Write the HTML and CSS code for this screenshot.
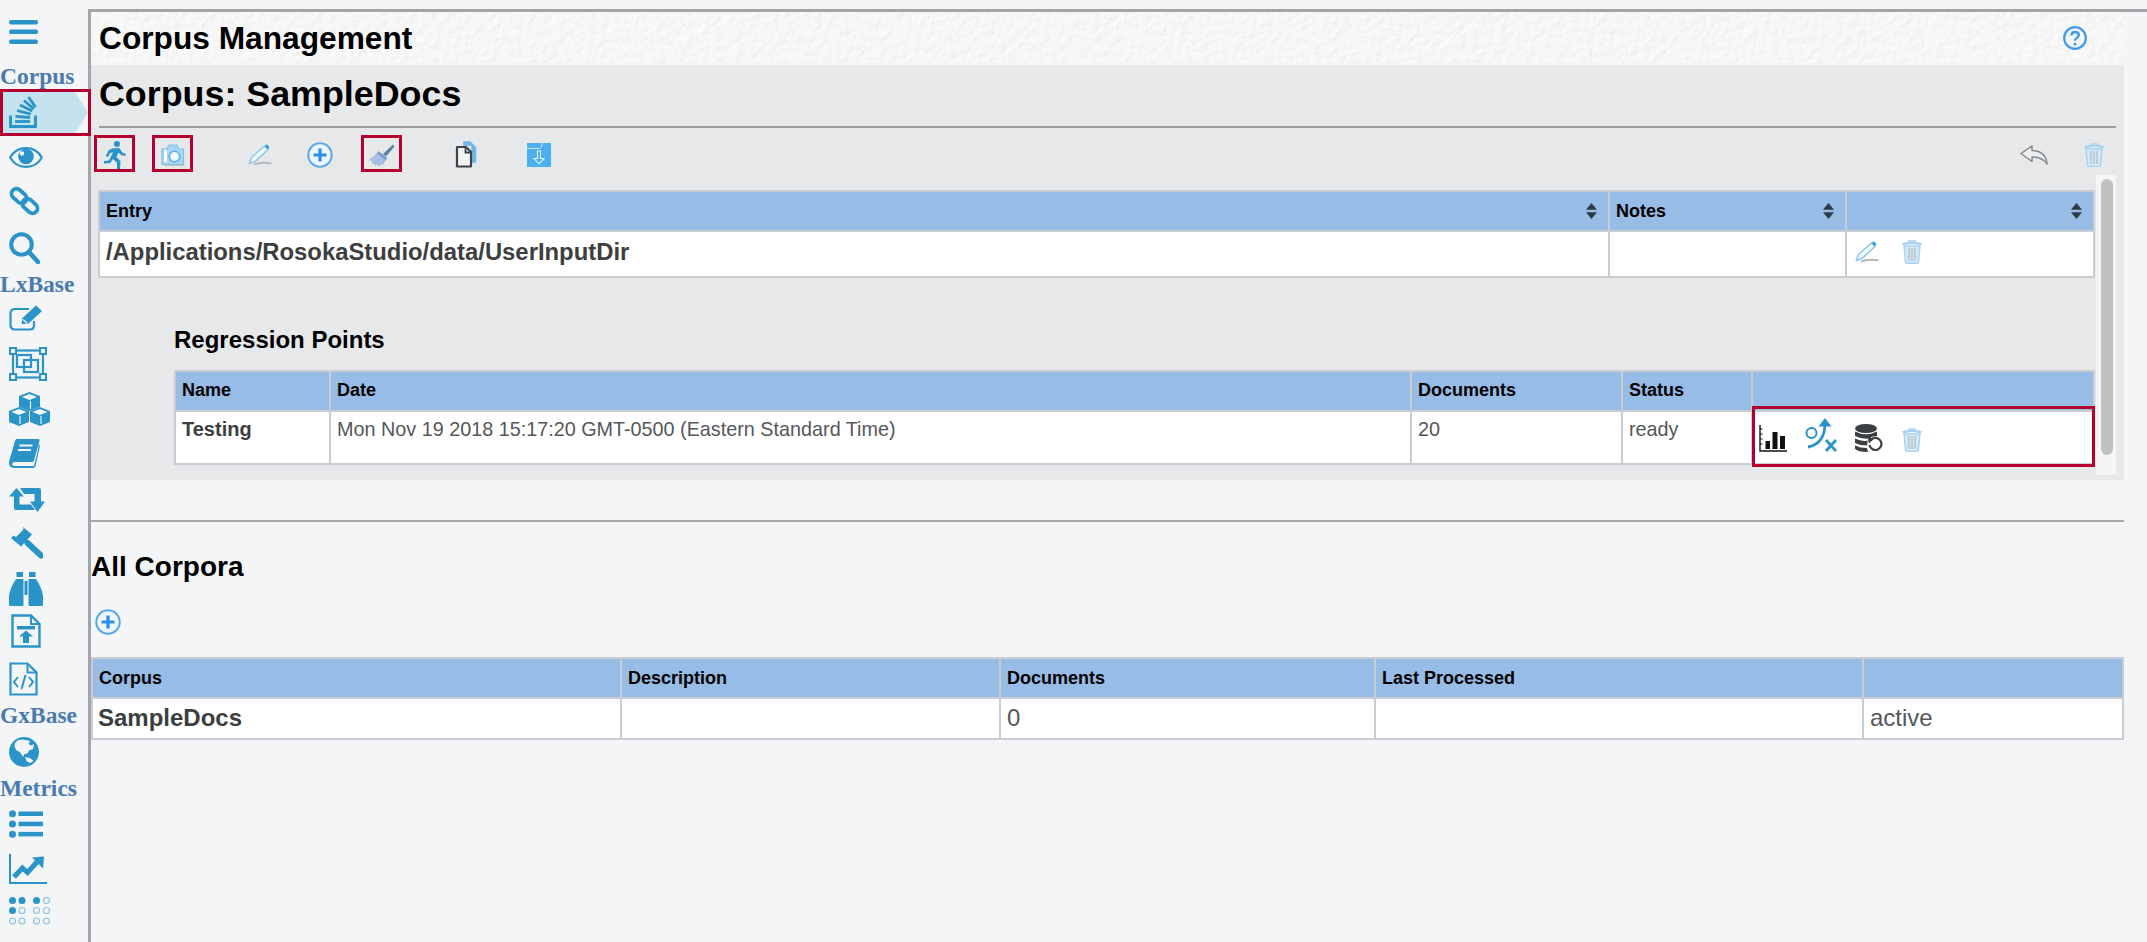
FILE: index.html
```html
<!DOCTYPE html>
<html lang="en">
<head>
<meta charset="utf-8">
<title>Corpus Management</title>
<link rel="stylesheet" href="styles.css">
</head>
<body>
<svg class="defs" width="0" height="0" aria-hidden="true">
  <defs>
    <filter id="paper" x="0" y="0" width="100%" height="100%">
      <feTurbulence type="fractalNoise" baseFrequency="0.14" numOctaves="4" seed="7"/>
      <feDiffuseLighting lighting-color="#ffffff" surfaceScale="0.55">
        <feDistantLight azimuth="45" elevation="68"/>
      </feDiffuseLighting>
    </filter>
    <symbol id="trash" viewBox="0 0 20 24">
      <path d="M7 2.500V1h6v1.500" fill="none" stroke="#a9d3ee" stroke-width="1.500"/>
      <path d="M0.500 4.500Q10 1 19.500 4.500" fill="none" stroke="#a9d3ee" stroke-width="2.600"/>
      <path d="M2 6H18L16.500 22Q16.300 23.500 15 23.500H5Q3.700 23.500 3.500 22Z" fill="#d3e8f5" stroke="#a9d3ee" stroke-width="1.400"/>
      <path d="M7 8V21M10 8V21M13 8V21" stroke="#b5bfc7" stroke-width="1.300"/>
    </symbol>
    <symbol id="pencil" viewBox="0 0 24 22">
      <path d="M1.500 19.500L3.500 13.500L16.500 2L20 5.500L7 17.500Z" fill="#f4f9fc" stroke="#8ecbea" stroke-width="1.600"/>
      <path d="M16.500 2L18 .8Q19 .2 20 1.200L21 2.300Q21.700 3.300 20.800 4.200L20 5.500Z" fill="#3aa3df"/>
      <path d="M6 20.500Q14 17.500 23.500 19.500" fill="none" stroke="#b7b9bb" stroke-width="2"/>
    </symbol>
    <symbol id="plus" viewBox="0 0 26 26">
      <circle cx="13" cy="13" r="11.700" fill="#eef6fc" stroke="#59a9ea" stroke-width="2"/>
      <path d="M13 6.500V19.500M6.500 13H19.500" stroke="#2a8fec" stroke-width="3.200"/>
    </symbol>
  </defs>
</svg>

<nav class="sidebar">
  <svg class="ic i-menu" viewBox="0 0 29 24"><g fill="#2a93c8"><rect width="29" height="4.500" rx="2"/><rect y="9.500" width="29" height="4.500" rx="2"/><rect y="19.500" width="29" height="4.500" rx="2"/></g></svg>
  <div class="side-label lab-corpus">Corpus</div>
  <div class="active-item">
    <svg class="ic i-stack" viewBox="0 0 28 32"><g fill="none" stroke="#2a93c8" stroke-width="2.800"><path d="M1.500 19.500V30.500H26.500V19.500"/><path d="M6 25.500H21"/><path d="M6.500 20.300L21 21.500"/><path d="M8 14.500L21.800 18.200"/><path d="M11 9L23.300 15"/><path d="M15 4.500L25 13"/><path d="M19.500 1L26.500 11"/></g></svg>
  </div>
  <svg class="ic i-eye" viewBox="0 0 34 21"><path d="M1.200 10.500C8 -2 26 -2 32.800 10.500C26 23 8 23 1.200 10.500Z" fill="none" stroke="#2a93c8" stroke-width="2.200"/><circle cx="17" cy="9.500" r="7.800" fill="#2a93c8"/><circle cx="13" cy="6.500" r="2.200" fill="#f4f5f7"/></svg>
  <svg class="ic i-link" viewBox="0 0 31 30"><g fill="none" stroke="#2a93c8" stroke-width="3.800"><rect x="1.600" y="5" width="17" height="10" rx="5" transform="rotate(42 10 10)"/><rect x="12.400" y="15" width="17" height="10" rx="5" transform="rotate(42 21 20)"/></g></svg>
  <svg class="ic i-search" viewBox="0 0 31 32"><circle cx="12.500" cy="12.500" r="10.300" fill="none" stroke="#2a93c8" stroke-width="4"/><path d="M20 20L29 30" stroke="#2a93c8" stroke-width="4.600" stroke-linecap="round"/></svg>
  <div class="side-label lab-lx">LxBase</div>
  <svg class="ic i-edit" viewBox="0 0 34 26"><path d="M20 4H6Q1.500 4 1.500 8.500V20Q1.500 24.500 6 24.500H21Q25 24.500 25 20V16" fill="none" stroke="#2a93c8" stroke-width="2.200"/><path d="M12.500 19L13.500 13L27 0.500L33 6L19.500 18.500Z" fill="#2a93c8"/><path d="M14 14.500L18 18" stroke="#f4f5f7" stroke-width="1.300"/></svg>
  <svg class="ic i-select" viewBox="0 0 38 34"><g fill="none" stroke="#2a93c8" stroke-width="2.200"><rect x="4" y="3.500" width="30" height="27"/><rect x="8" y="8" width="14" height="12" fill="#f4f5f7"/><rect x="15" y="13" width="14" height="12"/></g><g fill="#f4f5f7" stroke="#2a93c8" stroke-width="2"><rect x="1" y="1" width="6" height="6"/><rect x="31" y="1" width="6" height="6"/><rect x="1" y="27" width="6" height="6"/><rect x="31" y="27" width="6" height="6"/></g></svg>
  <svg class="ic i-cubes" viewBox="0 0 41 34"><g fill="#2a93c8"><path d="M20.500 0L31 4V15L20.500 19L10 15V4Z"/><path d="M10 15L20 19V30L10 34L0 30V19Z"/><path d="M31 15L41 19V30L31 34L21 30V19Z"/></g><g fill="#f4f5f7"><path d="M20.500 2L28 5L20.500 8L13 5Z"/><path d="M10 17L17.500 20L10 23L2.500 20Z"/><path d="M31 17L38.500 20L31 23L23.500 20Z"/></g><g fill="none" stroke="#f4f5f7" stroke-width="1.100"><path d="M11 24V32"/><path d="M32 24V32"/><path d="M21.500 9V17"/></g></svg>
  <svg class="ic i-book" viewBox="0 0 31 29"><path d="M8 0H29Q31 0 30.500 2L25 21.500Q24.500 23 23 23H6Q3 23.500 3 25.500Q3.500 27 6 27H25L28 15L30 5L31 7L26.500 27Q26 29 24 29H6Q0 29 0 24Q0 22.500 .5 21L6 2Q6.500 0 8 0Z" fill="#2a93c8"/><path d="M10.500 6.500H23.500M9 11H22" stroke="#f4f5f7" stroke-width="2"/></svg>
  <svg class="ic i-retweet" viewBox="0 0 36 24"><path d="M7.500 0L15 8.500H10.500V16.500H22L26 22H7Q5 22 5 20V8.500H0Z" fill="#2a93c8"/><path d="M11 0H30Q32 0 32 2V13.500H36L28.500 24L21 13.500H25.500V6H15Z" fill="#2a93c8"/></svg>
  <svg class="ic i-gavel" viewBox="0 0 33 33"><path d="M13 0L22 7.500L11 19.500L1 11L3.500 8.500L6 10L13.500 2.500Z" fill="#2a93c8"/><path d="M17.500 16L31 28.500" stroke="#2a93c8" stroke-width="6" stroke-linecap="round"/></svg>
  <svg class="ic i-binoc" viewBox="0 0 34 34"><g fill="#2a93c8"><rect x="7.500" y="0" width="6.500" height="5"/><rect x="20" y="0" width="6.500" height="5"/><path d="M7 7H14.500V33Q14.500 34 13.500 34H1.500Q0 34 0 32.500V24Q1 16 7 7Z"/><path d="M19.500 7H27Q33 16 34 24V32.500Q34 34 32.500 34H20.500Q19.500 34 19.500 33Z"/><rect x="15.500" y="9" width="3" height="14"/></g></svg>
  <svg class="ic i-fileup" viewBox="0 0 30 34"><path d="M1.500 1.500H20L28.500 10V32.500H1.500Z" fill="none" stroke="#2a93c8" stroke-width="2.400"/><path d="M20 1.500V10H28.500" fill="none" stroke="#2a93c8" stroke-width="2"/><rect x="6" y="12" width="18" height="3.500" fill="#2a93c8"/><path d="M15 16.500L22 22.500H18V29H12V22.500H8Z" fill="#2a93c8"/></svg>
  <svg class="ic i-filecode" viewBox="0 0 29 34"><path d="M1.500 1.500H18.500L27.500 10.500V32.500H1.500Z" fill="none" stroke="#2a93c8" stroke-width="2.200"/><path d="M18.500 1.500V10.500H27.500" fill="none" stroke="#2a93c8" stroke-width="2"/><path d="M9 15L5 20L9 25M20 15L24 20L20 25M16.500 13L12.500 27" fill="none" stroke="#2a93c8" stroke-width="2"/></svg>
  <div class="side-label lab-gx">GxBase</div>
  <svg class="ic i-globe" viewBox="0 0 30 30"><circle cx="15" cy="15" r="15" fill="#2a93c8"/><path d="M9 3L14 2.500L21 4L19.500 7L22 8.500L25 7L24 12L20 13.500L18.500 16.500L15.500 17L14 20L11 15L7.500 13.500L5.500 9.500L6 6Z" fill="#f4f5f7"/><path d="M16 20L21 21L24.500 24L21 26L17.500 24Z" fill="#f4f5f7"/></svg>
  <div class="side-label lab-me">Metrics</div>
  <svg class="ic i-list" viewBox="0 0 34 28"><g fill="#2a93c8"><circle cx="3.500" cy="3.800" r="3.500"/><circle cx="3.500" cy="14" r="3.500"/><circle cx="3.500" cy="24.200" r="3.500"/><rect x="9.500" y="1.500" width="24.500" height="4.500"/><rect x="9.500" y="11.700" width="24.500" height="4.500"/><rect x="9.500" y="21.900" width="24.500" height="4.500"/></g></svg>
  <svg class="ic i-chart" viewBox="0 0 38 30"><path d="M1 0V29H38" fill="none" stroke="#2a93c8" stroke-width="2"/><path d="M5 23L13.500 14L18.500 18.500L28 8" fill="none" stroke="#2a93c8" stroke-width="5"/><path d="M23 3.500L35 2.500L34 14.500Z" fill="#2a93c8"/></svg>
  <svg class="ic i-dots" viewBox="0 0 41 29"><g fill="#2a93c8"><circle cx="3.500" cy="3.500" r="3.500"/><circle cx="13" cy="3.500" r="3.500"/><circle cx="3.500" cy="13.500" r="3.500"/><circle cx="27.500" cy="3.500" r="3.500"/></g><g fill="none" stroke="#8bc2df" stroke-width="1.100"><circle cx="13" cy="13.500" r="3"/><circle cx="3.500" cy="24" r="3"/><circle cx="13" cy="24" r="3"/><circle cx="37.500" cy="3.500" r="3"/><circle cx="27.500" cy="13.500" r="3"/><circle cx="37.500" cy="13.500" r="3"/><circle cx="27.500" cy="24" r="3"/><circle cx="37.500" cy="24" r="3"/></g></svg>
</nav>

<main class="main">
  <header class="top-band">
    <svg class="paper" aria-hidden="true"><rect width="100%" height="100%" filter="url(#paper)"/></svg>
    <h1 class="page-title">Corpus Management</h1>
    <svg class="help" viewBox="0 0 24 24"><circle cx="12" cy="12" r="10.800" fill="none" stroke="#3f9cea" stroke-width="2.200"/><path d="M8.500 9.500Q8.500 6 12 6Q15.800 6 15.800 9Q15.800 11 13.500 12.200Q12 13 12 14.700" fill="none" stroke="#3f9cea" stroke-width="2.400"/><circle cx="12" cy="18" r="1.600" fill="#3f9cea"/></svg>
  </header>

  <section class="panel">
    <h2 class="corpus-title">Corpus: SampleDocs</h2>
    <div class="toolbar">
      <div class="tool hl">
        <svg class="t-run" viewBox="0 0 22 28"><g fill="#2a93c8"><circle cx="13" cy="3" r="3"/><path d="M8 7.500L15 7L19 12L22 13L21 15L17 14L14.500 11.500L12.500 16L16.500 20L16 28H13L13 21.500L8.500 18L6.500 22L0 22.500L0 20L5 19.500L9 11.500L6 12L4 16L1.800 15L4.500 9.500Z"/></g></svg>
      </div>
      <div class="tool hl g17">
        <svg class="t-cam" viewBox="0 0 24 22"><path d="M1 5H6L8 1H16L18 5H22.500V20.500H1Z" fill="#a8d6f2" stroke="#7cc0ea" stroke-width="1.200"/><rect x="3" y="6" width="3" height="12" fill="#fff"/><circle cx="13.500" cy="12.500" r="5.200" fill="#e9f5fc" stroke="#5fb2e6" stroke-width="1.500"/><circle cx="13.500" cy="12.500" r="2.200" fill="#fff"/><path d="M3 21.500H24" stroke="#bfc3c6" stroke-width="1.500"/></svg>
      </div>
      <div class="tool g46"><svg class="t-pencil"><use href="#pencil"/></svg></div>
      <div class="tool g19"><svg class="t-plus"><use href="#plus"/></svg></div>
      <div class="tool hl g21">
        <svg class="t-broom" viewBox="0 0 26 24"><path d="M14 11L24 1.500L25.500 3.500L17 13.500Z" fill="#5c7fa8"/><path d="M9.500 8.500L18 15L15 19L13.500 22L12 20L10 23L8.500 20.500L6 22.500L6 19.500L3 20.500L4 17.500L0.500 17Q6 14 9.500 8.500Z" fill="#a9bfe6" stroke="#8aa4d2" stroke-width=".6"/><path d="M9.500 8.500L18 15L16.500 17L8 10.500Z" fill="#7f9cc6"/></svg>
      </div>
      <div class="tool g43">
        <svg class="t-copy" viewBox="0 0 22 27"><path d="M9 1H15L20.500 6.500V21H17V4H9Z" fill="#6fb7e6" stroke="#6fb7e6" stroke-width="1.500"/><path d="M2 6H11L16 11V25.500H2Z" fill="#f2f3f4" stroke="#3f4346" stroke-width="2.200" stroke-linejoin="round"/><path d="M10.500 6V11.500H16" fill="none" stroke="#3f4346" stroke-width="1.800"/></svg>
      </div>
      <div class="tool g32">
        <svg class="t-dl" viewBox="0 0 24 24"><rect width="24" height="24" fill="#4cb0ee"/><path d="M0 5.500H12.500L15 3V0" fill="none" stroke="#e9f5fc" stroke-width=".8"/><path d="M10.500 8H13.500V15.500H17L12 21L7 15.500H10.500Z" fill="#4cb0ee" stroke="#eaf6fd" stroke-width="1.100"/></svg>
      </div>
      <div class="tool push">
        <svg class="t-reply" viewBox="0 0 28 20"><path d="M1 8.500L12 1V5.500Q26 6 27 19Q22 11.500 12 12V16.500Z" fill="#eceeef" stroke="#84888b" stroke-width="1.500" stroke-linejoin="round"/></svg>
      </div>
      <div class="tool g19"><svg class="t-trash"><use href="#trash"/></svg></div>
    </div>

    <div class="scroll-wrap">
      <div class="scroll-content">
        <table class="grid t-entry">
          <colgroup><col class="c-entry"><col class="c-notes"><col></colgroup>
          <thead>
            <tr>
              <th><div class="th-in"><span>Entry</span><span class="sort"></span></div></th>
              <th><div class="th-in"><span>Notes</span><span class="sort"></span></div></th>
              <th><div class="th-in"><span></span><span class="sort"></span></div></th>
            </tr>
          </thead>
          <tbody>
            <tr>
              <td class="big strong entry-path">/Applications/RosokaStudio/data/UserInputDir</td>
              <td></td>
              <td class="row-acts"><svg class="t-pencil"><use href="#pencil"/></svg><svg class="t-trash"><use href="#trash"/></svg></td>
            </tr>
          </tbody>
        </table>

        <div class="regression">
          <h3 class="reg-title">Regression Points</h3>
          <table class="grid t-reg">
            <colgroup><col class="c-name"><col class="c-date"><col class="c-docs"><col class="c-status"><col></colgroup>
            <thead>
              <tr><th>Name</th><th>Date</th><th>Documents</th><th>Status</th><th></th></tr>
            </thead>
            <tbody>
              <tr>
                <td class="strong">Testing</td>
                <td>Mon Nov 19 2018 15:17:20 GMT-0500 (Eastern Standard Time)</td>
                <td>20</td>
                <td>ready</td>
                <td class="reg-acts">
                  <div class="reg-icons">
                    <svg class="r-bars" viewBox="0 0 28 27"><path d="M1 0V26H28" fill="none" stroke="#111" stroke-width="1.400"/><path d="M1 4H3.500M1 9H3.500M1 14H3.500M1 19H3.500" stroke="#111" stroke-width="1.200"/><rect x="6.500" y="16" width="4.500" height="8" fill="#111"/><rect x="13.500" y="7" width="5" height="17" fill="#111"/><rect x="21" y="11" width="5" height="13" fill="#111"/></svg>
                    <svg class="r-play" viewBox="0 0 32 34"><circle cx="6.500" cy="15" r="5" fill="none" stroke="#2a93c8" stroke-width="2"/><path d="M3 29Q19 26 20 7" fill="none" stroke="#2a93c8" stroke-width="2.800"/><path d="M20 0L26.500 8.500H13.500Z" fill="#2a93c8"/><path d="M21 22L31 33M31 22L21 33" stroke="#2a93c8" stroke-width="2.800"/></svg>
                    <svg class="r-db" viewBox="0 0 28 28"><g fill="#3c3f42"><ellipse cx="11" cy="4.500" rx="11" ry="4.500"/><path d="M0 7.500Q11 13 22 7.500V12Q11 17.500 0 12Z"/><path d="M0 14.500Q8 18.500 15 16L12 21.500Q5 21.500 0 19Z"/><path d="M0 21.500Q5 24 12 24L13 28Q3 28 0 25Z"/></g><circle cx="20" cy="20" r="7.800" fill="#fff"/><path d="M15.500 16.500A6 6 0 1 1 14.500 21" fill="none" stroke="#3c3f42" stroke-width="2.200"/><path d="M12.500 13L19 14.500L14 19.500Z" fill="#3c3f42"/></svg>
                    <svg class="t-trash r-trash"><use href="#trash"/></svg>
                  </div>
                </td>
              </tr>
            </tbody>
          </table>
        </div>
      </div>
      <div class="scroll-track"><div class="scroll-thumb"></div></div>
    </div>
  </section>

  <hr class="divider">

  <h2 class="all-title">All Corpora</h2>
  <svg class="all-plus"><use href="#plus"/></svg>
  <table class="grid t-all">
    <colgroup><col class="c-a1"><col class="c-a2"><col class="c-a3"><col class="c-a4"><col></colgroup>
    <thead>
      <tr><th>Corpus</th><th>Description</th><th>Documents</th><th>Last Processed</th><th></th></tr>
    </thead>
    <tbody>
      <tr><td class="big strong">SampleDocs</td><td></td><td class="big">0</td><td></td><td class="big">active</td></tr>
    </tbody>
  </table>
</main>
</body>
</html>
```

FILE: styles.css
```css
* { box-sizing: border-box; }
html, body { height: 100%; }
body {
  margin: 0;
  display: flex;
  height: 942px;
  overflow: hidden;
  background: #f4f5f7;
  font-family: "Liberation Sans", Arial, sans-serif;
  color: #55575a;
}
.defs { position: absolute; }

/* sidebar */
.sidebar {
  width: 88px;
  flex: none;
  display: flex;
  flex-direction: column;
  align-items: flex-start;
  padding-left: 9px;
}
.ic { display: block; flex: none; }
.side-label {
  margin-left: -9px;
  height: 26px;
  font: bold 23.5px/26px "Liberation Serif", "Times New Roman", serif;
  color: #4a7bae;
  white-space: nowrap;
}
.i-menu { width: 29px; height: 24px; margin-top: 20px; }
.lab-corpus { margin-top: 19px; }
.active-item {
  position: relative;
  width: 91px;
  height: 47px;
  margin-left: -9px;
  padding: 4px 0 0 6px;
  border: 3px solid #b4002e;
  background: linear-gradient(#c5e3ee, #c5e3ee) no-repeat 0 0 / 72px 100%;
}
.active-item::after {
  content: "";
  position: absolute;
  left: 72px;
  top: 0;
  width: 13px;
  height: 100%;
  background: #c5e3ee;
  clip-path: polygon(0 0, 100% 50%, 0 100%);
}
.i-stack { width: 28px; height: 32px; position: relative; z-index: 1; }
.i-eye { width: 34px; height: 21px; margin-top: 11px; }
.i-link { width: 31px; height: 30px; margin-top: 18px; }
.i-search { width: 31px; height: 32px; margin-top: 16px; }
.lab-lx { margin-top: 7px; }
.i-edit { width: 34px; height: 26px; margin-top: 8px; }
.i-select { width: 38px; height: 34px; margin-top: 16px; }
.i-cubes { width: 41px; height: 34px; margin-top: 11px; }
.i-book { width: 31px; height: 29px; margin-top: 13px; }
.i-retweet { width: 36px; height: 24px; margin-top: 20px; }
.i-gavel { width: 33px; height: 33px; margin-top: 15px; margin-left: 1px; }
.i-binoc { width: 34px; height: 34px; margin-top: 12px; }
.i-fileup { width: 30px; height: 34px; margin-top: 8px; margin-left: 2px; }
.i-filecode { width: 29px; height: 34px; margin-top: 14px; }
.lab-gx { margin-top: 6px; }
.i-globe { width: 30px; height: 30px; margin-top: 9px; }
.lab-me { margin-top: 8px; }
.i-list { width: 34px; height: 28px; margin-top: 9px; }
.i-chart { width: 38px; height: 30px; margin-top: 16px; }
.i-dots { width: 41px; height: 29px; margin-top: 13px; }

/* main column */
.main {
  flex: 1;
  min-width: 0;
  margin-top: 9px;
  padding-right: 23px;
  border-top: 3px solid #a3a5a8;
  border-left: 3px solid #a3a5a8;
}
.top-band {
  position: relative;
  height: 51px;
  display: flex;
  align-items: center;
  justify-content: space-between;
  padding: 0 37px 0 8px;
  background: #f0f1f3;
  overflow: hidden;
}
.paper {
  position: absolute;
  left: 0;
  top: 0;
  width: 100%;
  height: 100%;
}
.page-title {
  position: relative;
  margin: 0;
  font-size: 31.7px;
  line-height: 40px;
  font-weight: bold;
  color: #000;
}
.help { position: relative; width: 24px; height: 24px; margin-top: 1px; }

.panel {
  margin-top: 2px;
  height: 415px;
  padding: 0 8px;
  background: #e6e8ea;
}
.corpus-title {
  margin: 0;
  padding-top: 8px;
  height: 63px;
  border-bottom: 2px solid #9a9c9e;
  font-size: 35.85px;
  line-height: 42px;
  font-weight: bold;
  color: #000;
}
.toolbar {
  display: flex;
  margin: 7px 2px 0 -5px;
}
.tool {
  width: 41px;
  height: 37px;
  flex: none;
  display: flex;
  align-items: center;
  justify-content: center;
  padding-top: 2px;
}
.hl { border: 3px solid #b4002e; }
.g17 { margin-left: 17px; }
.g19 { margin-left: 19px; }
.g21 { margin-left: 21px; }
.g32 { margin-left: 32px; }
.g43 { margin-left: 43px; }
.g46 { margin-left: 46px; }
.push { margin-left: auto; }
.t-run { width: 22px; height: 28px; }
.t-cam { width: 24px; height: 22px; }
.t-pencil { width: 24px; height: 22px; flex: none; }
.t-plus { width: 26px; height: 26px; }
.t-broom { width: 26px; height: 24px; }
.t-copy { width: 22px; height: 27px; }
.t-dl { width: 24px; height: 24px; }
.t-reply { width: 28px; height: 20px; }
.t-trash { width: 20px; height: 24px; flex: none; }

.scroll-wrap {
  display: flex;
  margin-top: 3px;
  height: 300px;
}
.scroll-content {
  flex: none;
  width: 1997px;
  margin-left: -1px;
  padding-top: 15px;
}
.scroll-track {
  width: 20px;
  height: 300px;
  margin-left: 1px;
  padding: 4px 3px 0 5px;
  background: #f4f5f7;
}
.scroll-thumb {
  height: 276px;
  border-radius: 6px;
  background: #c0c1c3;
}

/* tables */
.grid {
  width: 100%;
  table-layout: fixed;
  border-collapse: collapse;
  background: #fff;
}
.grid th, .grid td {
  border: 2px solid #c9ccd0;
  padding: 0 6px;
  text-align: left;
  white-space: nowrap;
}
.grid th {
  height: 40px;
  background: #97bce6;
  font-size: 18px;
  font-weight: bold;
  color: #000;
}
.grid td { font-size: 20px; }
.big { font-size: 24px !important; }
.strong { font-weight: bold; color: #3c3e40; }
.th-in {
  display: flex;
  align-items: center;
  justify-content: space-between;
  padding-right: 5px;
}
.sort {
  width: 11px;
  height: 16px;
  background: #2f3a45;
  clip-path: polygon(50% 0, 100% 42%, 50% 42%, 50% 58%, 100% 58%, 50% 100%, 0 58%, 50% 58%, 50% 42%, 0 42%);
}
.c-entry { width: 1510px; }
.c-notes { width: 237px; }
.t-entry td { height: 46px; padding-bottom: 5px; }
.entry-path { font-size: 23.85px !important; }
.row-acts > svg { vertical-align: middle; }
.row-acts > svg + svg { margin-left: 23px; }
.row-acts { padding-left: 8px !important; }

.regression { margin-left: 76px; }
.reg-title {
  margin: 0;
  padding-top: 48px;
  height: 92px;
  font-size: 24px;
  line-height: 28px;
  font-weight: bold;
  color: #000;
}
.c-name { width: 155px; }
.c-date { width: 1081px; }
.c-docs { width: 211px; }
.c-status { width: 130px; }
.t-reg th { padding-bottom: 2px; }
.t-reg td { height: 53px; vertical-align: top; padding-top: 5px; line-height: 25px; font-size: 19.8px; }
.t-reg td.strong { font-size: 20px; }
.reg-acts { position: relative; padding: 0 !important; }
.reg-acts::after {
  content: "";
  position: absolute;
  left: -1px;
  right: -2px;
  top: -6px;
  bottom: -4px;
  border: 3px solid #b4002e;
}
.reg-icons {
  display: flex;
  align-items: flex-end;
  height: 40px;
  padding-left: 6px;
}
.r-bars { width: 28px; height: 27px; }
.r-play { width: 32px; height: 34px; margin-left: 18px; }
.r-db { width: 28px; height: 28px; margin-left: 18px; }
.r-trash { margin-left: 19px; }

.divider {
  margin: 40px 0 0;
  border: 0;
  height: 2px;
  background: #a5a7a9;
}
.all-title {
  margin: 0;
  padding-top: 29px;
  height: 64px;
  font-size: 28px;
  line-height: 32px;
  font-weight: bold;
  color: #000;
}
.all-plus {
  display: block;
  width: 26px;
  height: 26px;
  margin: 23px 0 0 4px;
}
.t-all { margin-top: 22px; }
.t-all td { height: 41px; padding-bottom: 2px; }
.t-all td.strong { padding-left: 5px; }
.c-a1 { width: 529px; }
.c-a2 { width: 379px; }
.c-a3 { width: 375px; }
.c-a4 { width: 488px; }
```
